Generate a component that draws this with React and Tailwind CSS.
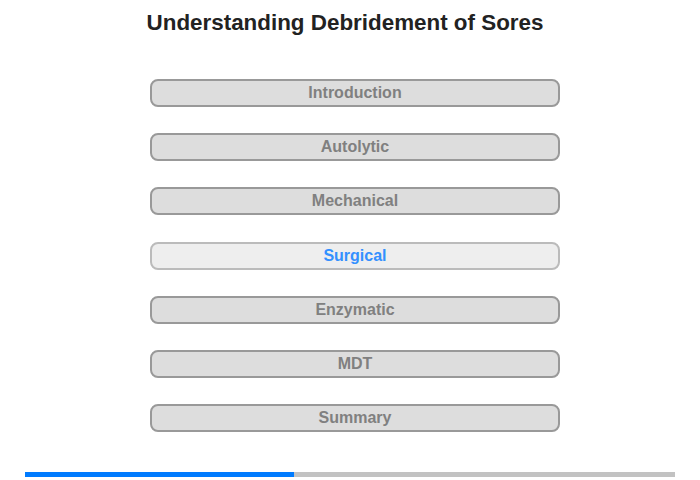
const items = ['Introduction', 'Autolytic', 'Mechanical', 'Surgical', 'Enzymatic', 'MDT', 'Summary'];

export default function App() {
  const active = 'Surgical';
  return (
    <div className="w-[700px] h-[480px] bg-white flex flex-col font-['Liberation_Sans',Arial,sans-serif]">
      <h1 className="pt-[10px] pr-[10px] h-[79px] text-center text-[22.4px] leading-[26px] font-bold text-[#222]">
        Understanding Debridement of Sores
      </h1>
      <div className="flex flex-col items-center gap-[26.2px] pl-[150px] pr-[140px]">
        {items.map(name => (
          <button
            key={name}
            className={
              name === active
                ? 'w-full h-[28px] rounded-[8px] border-2 border-[#bbb] bg-[#eee] text-[16px] font-bold text-[#3390ff]'
                : 'w-full h-[28px] rounded-[8px] border-2 border-[#999] bg-[#ddd] text-[16px] font-bold text-[#808080]'
            }
          >
            {name}
          </button>
        ))}
      </div>
      <div className="mt-auto mb-[3px] mx-[25px] h-[5px] flex bg-[#c2c2c2]">
        <div className="w-[269px] bg-[#007bff]" />
      </div>
    </div>
  );
}
